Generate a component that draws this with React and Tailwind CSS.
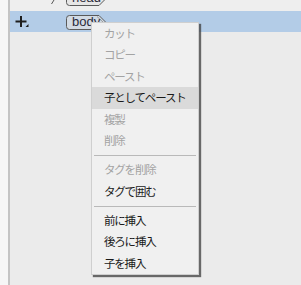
import React from "react";

const items = [
  { t: "カット", d: true },
  { t: "コピー", d: true },
  { t: "ペースト", d: true },
  { t: "子としてペースト", h: true },
  { t: "複製", d: true },
  { t: "削除", d: true },
  { sep: true },
  { t: "タグを削除", d: true },
  { t: "タグで囲む" },
  { sep: true },
  { t: "前に挿入" },
  { t: "後ろに挿入" },
  { t: "子を挿入" },
];

function Tag({ label, bg }) {
  return (
    <div className="relative w-[42px] h-[15px]">
      <svg className="absolute inset-0" width="42" height="15" viewBox="0 0 42 15">
        <path d="M3.5 0.5 H33 L40 7.5 L33 14.5 H3.5 Q0.5 14.5 0.5 11.5 V3.5 Q0.5 0.5 3.5 0.5 Z" fill={bg} stroke="#5a5a5a" strokeWidth="1" />
        <path d="M31 1.5 L37.5 7.5" stroke="#9a9a9a" strokeWidth="1" fill="none" />
      </svg>
      <span className="absolute left-[6px] top-[-1px] text-[13px] leading-[15px] text-[#2a2a3a] font-['Liberation_Sans',sans-serif]">{label}</span>
    </div>
  );
}

export default function App() {
  return (
    <div className="relative w-[301px] h-[285px] overflow-hidden bg-[#ebebeb] flex font-['Noto_Sans_CJK_JP',sans-serif]">
      <div className="w-[10px] h-full bg-[#f6f6f6] border-r-2 border-[#c4c4c4]" />
      <div className="flex-1 flex flex-col">
        <div className="h-[11px] bg-[#eeeeee] relative overflow-hidden">
          <svg className="absolute left-[41px] top-0" width="4" height="5" viewBox="0 0 4 5">
            <path d="M0.5 4 L3 0" stroke="#555" strokeWidth="1" />
          </svg>
          <div className="absolute left-[56px] top-[-9px]">
            <Tag label="head" bg="#e6e6e6" />
          </div>
        </div>
        <div className="h-[21px] bg-[#b3cce7] flex items-center">
          <svg className="ml-[5px]" width="15" height="13" viewBox="0 0 15 13">
            <path d="M6 1 V12 M0.5 6.5 H11.5" stroke="#1e1e1e" strokeWidth="2" fill="none" />
            <path d="M13.5 9 V12 H10.5 Z" fill="#1e1e1e" />
          </svg>
          <div className="ml-[36px] mt-[1px]">
            <Tag label="body" bg="#d3dbe4" />
          </div>
        </div>
        <div className="flex-1" />
      </div>

      <div className="absolute left-[91px] top-[22px] w-[108px] bg-[#f0f0f0] border border-[#cfcfcf] shadow-[2px_2px_1px_rgba(60,60,60,0.75)] flex flex-col">
        {items.map((it, i) =>
          it.sep ? (
            <div key={i} className="h-[8px] flex items-center px-[2px]">
              <div className="h-px w-full bg-[#b9b9b9]" />
            </div>
          ) : (
            <div
              key={i}
              className={
                "h-[21.4px] flex items-center pl-[12px] text-[11.5px] tracking-[-1.2px] leading-none " +
                (it.h ? "bg-[#dadada] text-[#1a1a1a]" : it.d ? "text-[#a3a3a3]" : "text-[#1a1a1a]")
              }
            >
              {it.t}
            </div>
          )
        )}
      </div>
    </div>
  );
}
